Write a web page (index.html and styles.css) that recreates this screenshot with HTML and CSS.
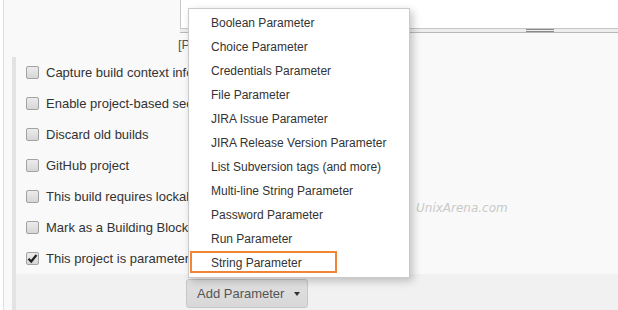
FILE: index.html
```html
<!DOCTYPE html>
<html>
<head>
<meta charset="utf-8">
<link rel="stylesheet" href="styles.css">
</head>
<body>
<div class="frame">
  <div class="top">
    <div class="top-spacer"></div>
    <div class="editor">
      <div class="editor-area"></div>
      <div class="resize"><div class="grip"></div></div>
    </div>
  </div>
  <div class="links">[Plain text] Preview</div>
  <div class="section">
    <div class="row"><span class="cb"></span><span>Capture build context information</span></div>
    <div class="row"><span class="cb"></span><span>Enable project-based security</span></div>
    <div class="row"><span class="cb"></span><span>Discard old builds</span></div>
    <div class="row"><span class="cb"></span><span>GitHub project</span></div>
    <div class="row"><span class="cb"></span><span>This build requires lockable resources</span></div>
    <div class="row"><span class="cb"></span><span>Mark as a Building Block</span></div>
    <div class="row"><span class="cb checked"><svg width="11" height="11" viewBox="0 0 11 11"><path d="M1.5 5.8 L4.2 8.5 L9.5 2" fill="none" stroke="#222" stroke-width="2.2"/></svg></span><span>This project is parameterized</span></div>
    <div class="band">
      <div class="btn">Add Parameter<span class="caret"></span></div>
    </div>
  </div>
</div>
<div class="watermark">UnixArena.com</div>
<div class="menu">
  <div class="item">Boolean Parameter</div>
  <div class="item">Choice Parameter</div>
  <div class="item">Credentials Parameter</div>
  <div class="item">File Parameter</div>
  <div class="item">JIRA Issue Parameter</div>
  <div class="item">JIRA Release Version Parameter</div>
  <div class="item">List Subversion tags (and more)</div>
  <div class="item">Multi-line String Parameter</div>
  <div class="item">Password Parameter</div>
  <div class="item">Run Parameter</div>
  <div class="item marked">String Parameter</div>
</div>
</body>
</html>
```
FILE: styles.css
```css
html, body {
  margin: 0;
  padding: 0;
}
body {
  width: 618px;
  height: 310px;
  overflow: hidden;
  background: #ffffff;
  font-family: "Liberation Sans", Arial, sans-serif;
  position: relative;
}
.frame {
  margin-left: 3px;
  border-left: 1px solid #dedede;
  background: #f9f9f9;
  height: 310px;
  overflow: hidden;
}
.top {
  display: flex;
  height: 33px;
}
.top-spacer {
  width: 176px;
}
.editor {
  flex: 1;
  display: flex;
  flex-direction: column;
}
.editor-area {
  height: 28px;
  background: #ffffff;
  border-left: 1px solid #c8c8c8;
}
.resize {
  height: 3px;
  background: #ededed;
  border-top: 1px solid #c6c6c6;
  border-bottom: 1px solid #b8b8b8;
}
.grip {
  margin-left: 346px;
  width: 28px;
  height: 1px;
  border-top: 1px solid #8a8a8a;
  border-bottom: 1px solid #8a8a8a;
}
.links {
  height: 24px;
  padding-left: 174px;
  padding-top: 2px;
  box-sizing: border-box;
  font-size: 13px;
  line-height: 20px;
  color: #555;
  white-space: nowrap;
}
.section {
  margin-left: 8px;
  border-left: 4px solid #e3e3e3;
}
.row {
  height: 31px;
  display: flex;
  align-items: center;
  gap: 7px;
  padding-left: 10px;
  font-size: 13px;
  color: #333;
  white-space: nowrap;
}
.cb {
  width: 11px;
  height: 11px;
  border: 1px solid #a2a2a2;
  border-radius: 2px;
  background: linear-gradient(#ececec, #d6d6d6);
  display: flex;
  align-items: center;
  justify-content: center;
  flex: none;
}
.band {
  height: 36px;
  background: #f1f1f1;
  padding-top: 5px;
  padding-left: 170px;
  box-sizing: border-box;
}
.btn {
  width: 122px;
  height: 29px;
  box-sizing: border-box;
  border: 1px solid #c6c6c6;
  border-radius: 3px;
  background: linear-gradient(#e0e0e0, #d8d8d8);
  display: flex;
  align-items: center;
  padding-left: 10px;
  font-size: 13px;
  color: #555;
}
.caret {
  margin-left: 10px;
  width: 0;
  height: 0;
  border-left: 3.5px solid transparent;
  border-right: 3.5px solid transparent;
  border-top: 4px solid #333;
}
.watermark {
  position: absolute;
  left: 416px;
  top: 200px;
  font-family: "DejaVu Sans", sans-serif;
  font-style: italic;
  font-size: 12px;
  line-height: 16px;
  color: #c9c9c9;
}
.menu {
  position: absolute;
  left: 188px;
  top: 8px;
  width: 222px;
  height: 270px;
  box-sizing: border-box;
  background: #ffffff;
  border: 1px solid #cacaca;
  box-shadow: 3px 3px 8px rgba(0, 0, 0, 0.22);
  padding-top: 2px;
}
.item {
  height: 24px;
  line-height: 24px;
  padding-left: 22px;
  font-size: 12px;
  color: #333;
  white-space: nowrap;
}
.item.marked {
  margin: 0 0 0 1px;
  width: 147px;
  height: 22px;
  line-height: 20px;
  box-sizing: border-box;
  border: 2px solid #ef8535;
  padding-left: 19px;
}
```
